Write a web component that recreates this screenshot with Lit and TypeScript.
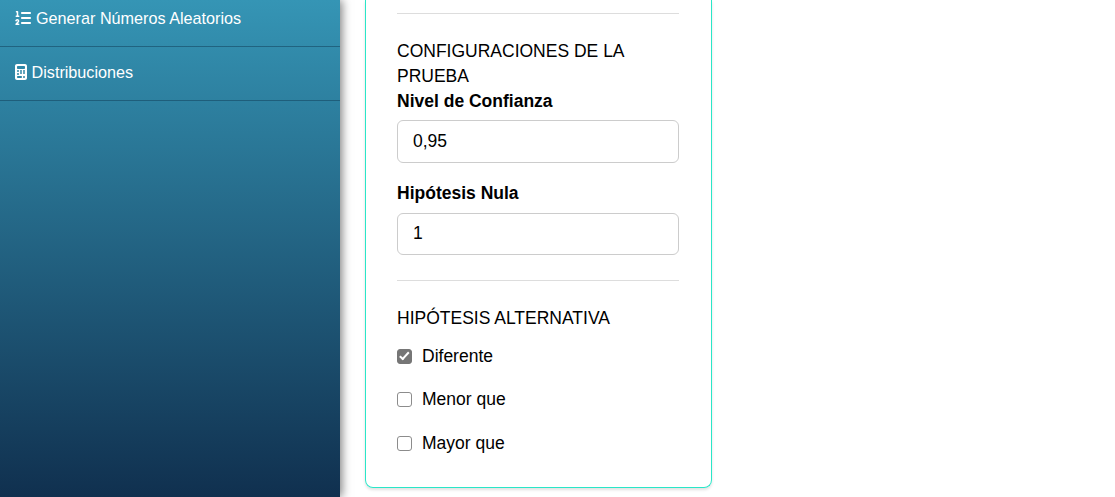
import { LitElement, html, css } from 'lit';
import { customElement } from 'lit/decorators.js';

@customElement('app-root')
export class AppRoot extends LitElement {
  static styles = css`
    :host {
      display: flex;
      height: 497px;
      overflow: hidden;
      background: #fff;
      font-family: 'Liberation Sans', Arial, sans-serif;
      color: #000;
    }

    .sidebar {
      flex: 0 0 340px;
      background: linear-gradient(180deg, #3595b5 0%, #10304f 100%);
      box-shadow: 2px 0 9px rgba(0, 0, 0, 0.5);
    }

    .menu-item {
      display: flex;
      align-items: center;
      gap: 5px;
      height: 54px;
      box-sizing: border-box;
      padding: 0 0 2px 15px;
      border-bottom: 1px solid rgba(15, 60, 85, 0.5);
      color: #fff;
      font-size: 16.2px;
    }

    .menu-item:first-child {
      height: 47px;
      padding-bottom: 9px;
    }

    .menu-item svg {
      display: block;
      margin-bottom: 1px;
      fill: #fff;
    }

    .menu-item svg.calc {
      margin-right: -0.5px;
    }

    .content {
      flex: 1;
      padding-left: 25px;
    }

    .card {
      width: 347px;
      height: 488px;
      box-sizing: border-box;
      padding: 13px 32px 0 31px;
      border: 1px solid #2ae6c8;
      border-top: none;
      border-radius: 0 0 8px 8px;
      box-shadow: 0 2px 3px rgba(0, 0, 0, 0.12);
      font-size: 17.5px;
      line-height: 25.14px;
    }

    hr {
      margin: 0;
      border: none;
      border-top: 1px solid #ddd;
    }

    .heading {
      margin: 24.5px 0 0;
      font-weight: normal;
      font-size: 17.5px;
    }

    .field-label {
      display: block;
      font-weight: bold;
    }

    .field-input {
      display: block;
      width: 100%;
      height: 42.6px;
      box-sizing: border-box;
      margin: 6px 0 18px;
      padding: 0 15px;
      border: 1px solid #ccc;
      border-radius: 6px;
      font: inherit;
      color: #000;
      outline: none;
    }

    .field-input.second {
      margin: 7px 0 25px;
    }

    .checks {
      display: flex;
      flex-direction: column;
      gap: 18.36px;
      margin-top: 12.9px;
    }

    .check {
      display: flex;
      align-items: center;
      gap: 10px;
    }

    .check input {
      appearance: none;
      position: relative;
      flex: none;
      width: 15px;
      height: 15px;
      box-sizing: border-box;
      margin: 0;
      border: 1.5px solid #8c8c8c;
      border-radius: 3px;
      background: #fff;
    }

    .check input:checked {
      border-color: #767676;
      background: #767676;
    }

    .check input:checked::after {
      content: '';
      position: absolute;
      left: 3.6px;
      top: 0.6px;
      width: 3px;
      height: 7.5px;
      border: solid #fff;
      border-width: 0 2px 2px 0;
      transform: rotate(42deg);
    }
  `;

  render() {
    return html`
      <nav class="sidebar">
        <div class="menu-item">
          <svg width="16" height="16" viewBox="0 0 512 512">
            <path d="M24 56c0-13.300 10.700-24 24-24H80c13.300 0 24 10.700 24 24V176h16c13.300 0 24 10.700 24 24s-10.700 24-24 24H40c-13.300 0-24-10.700-24-24s10.700-24 24-24H56V80H48C34.700 80 24 69.300 24 56zM86.700 341.200c-6.500-7.400-18.300-6.900-24 1.200L51.500 357.900c-7.700 10.800-22.700 13.300-33.500 5.600s-13.300-22.700-5.600-33.500l11.100-15.600c23.700-33.200 72.300-35.600 99.200-4.900c21.300 24.400 20.800 60.900-1.100 84.700L86.800 432H120c13.300 0 24 10.700 24 24s-10.700 24-24 24H32c-9.500 0-18.200-5.600-22-14.400s-2.100-18.900 4.300-25.900l72-78c5.300-5.800 5.400-14.600 .3-20.500zM224 64H480c17.700 0 32 14.300 32 32s-14.300 32-32 32H224c-17.700 0-32-14.300-32-32s14.300-32 32-32zm0 160H480c17.700 0 32 14.300 32 32s-14.300 32-32 32H224c-17.700 0-32-14.300-32-32s14.300-32 32-32zm0 160H480c17.700 0 32 14.300 32 32s-14.300 32-32 32H224c-17.700 0-32-14.300-32-32s14.300-32 32-32z"></path>
          </svg>
          <span>Generar Números Aleatorios</span>
        </div>
        <div class="menu-item">
          <svg class="calc" width="12" height="16" viewBox="0 0 384 512">
            <path d="M64 0C28.700 0 0 28.700 0 64V448c0 35.300 28.700 64 64 64H320c35.300 0 64-28.700 64-64V64c0-35.300-28.700-64-64-64H64zM96 64H288c17.700 0 32 14.300 32 32v32c0 17.700-14.300 32-32 32H96c-17.700 0-32-14.300-32-32V96c0-17.700 14.300-32 32-32zm32 160a32 32 0 1 1 -64 0 32 32 0 1 1 64 0zM96 352a32 32 0 1 1 0-64 32 32 0 1 1 0 64zM64 416c0-17.700 14.300-32 32-32h96c17.700 0 32 14.300 32 32s-14.300 32-32 32H96c-17.700 0-32-14.300-32-32zM192 256a32 32 0 1 1 0-64 32 32 0 1 1 0 64zm32 32a32 32 0 1 1 -64 0 32 32 0 1 1 64 0zm64-32a32 32 0 1 1 0-64 32 32 0 1 1 0 64zm32 32a32 32 0 1 1 -64 0 32 32 0 1 1 64 0zM288 448a32 32 0 1 1 0-64 32 32 0 1 1 0 64z"></path>
          </svg>
          <span>Distribuciones</span>
        </div>
      </nav>
      <main class="content">
        <section class="card">
          <hr />
          <h5 class="heading">CONFIGURACIONES DE LA PRUEBA</h5>
          <label class="field-label">Nivel de Confianza</label>
          <input class="field-input" type="text" value="0,95" />
          <label class="field-label">Hipótesis Nula</label>
          <input class="field-input second" type="text" value="1" />
          <hr />
          <h5 class="heading">HIPÓTESIS ALTERNATIVA</h5>
          <div class="checks">
            <label class="check"><input type="checkbox" checked />Diferente</label>
            <label class="check"><input type="checkbox" />Menor que</label>
            <label class="check"><input type="checkbox" />Mayor que</label>
          </div>
        </section>
      </main>
    `;
  }
}
